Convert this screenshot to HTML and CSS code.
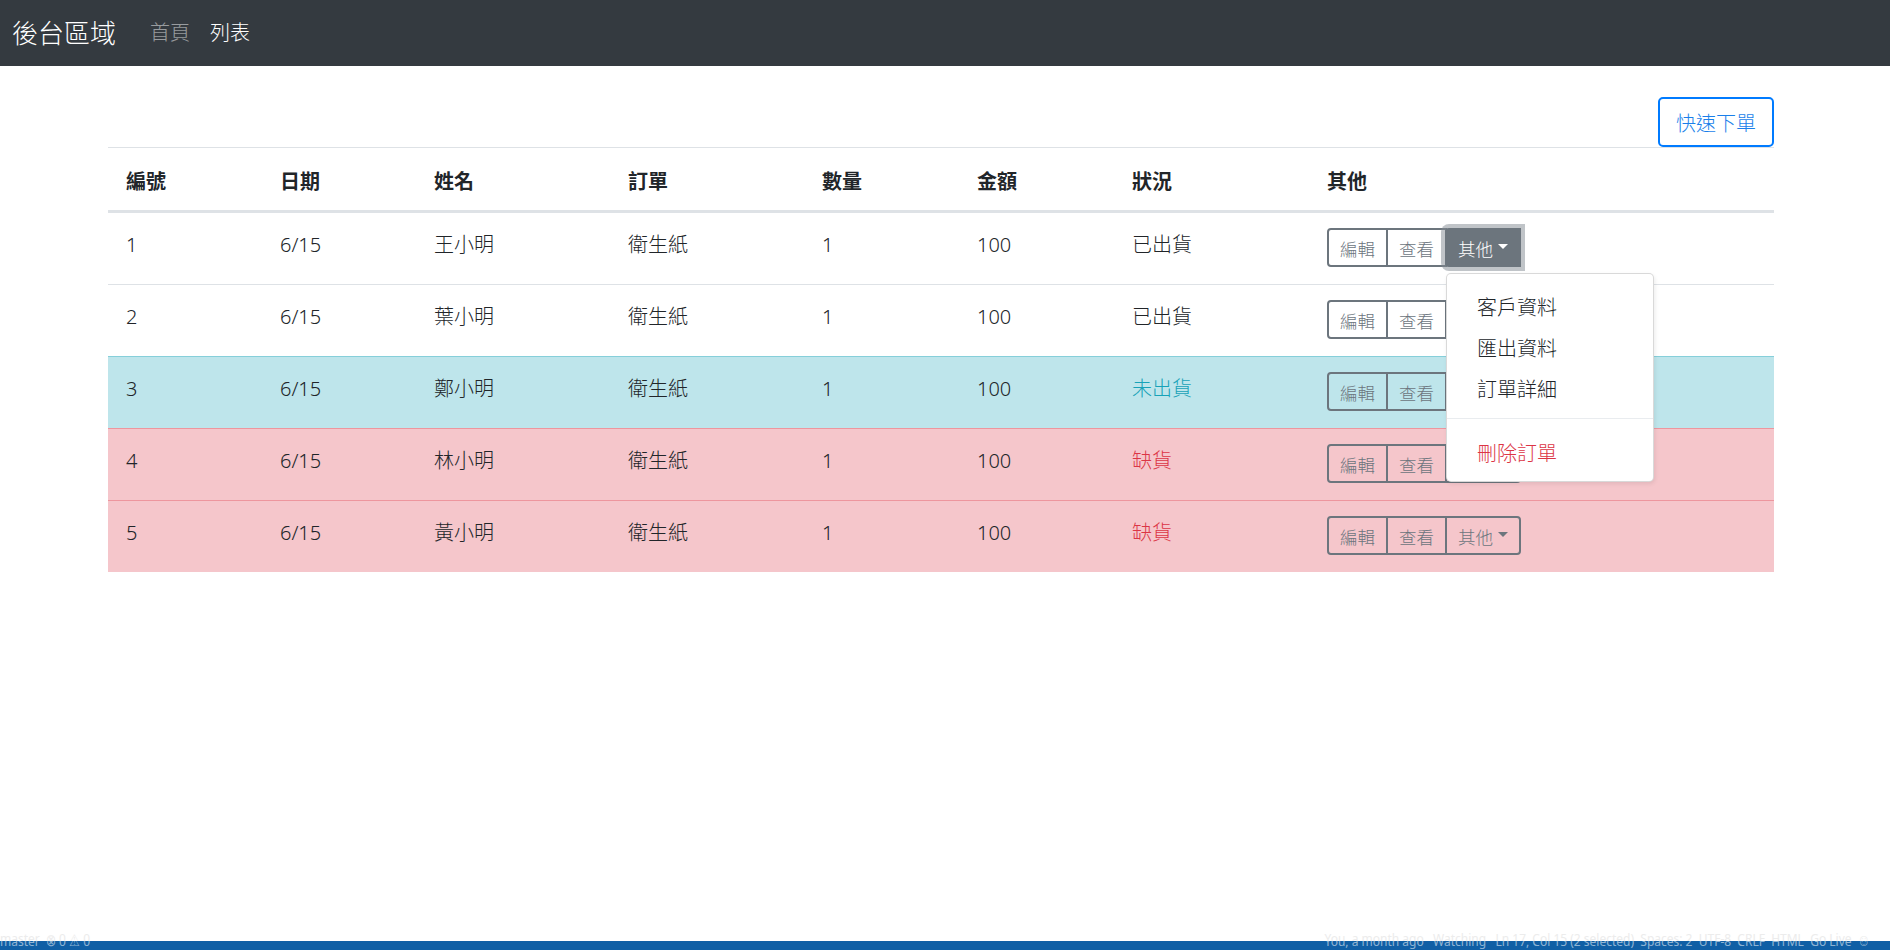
FILE: index.html
```html
<!DOCTYPE html>
<html lang="zh-Hant">
<head>
<meta charset="utf-8">
<title>後台區域</title>
<link rel="stylesheet" href="styles.css">
</head>
<body>
<nav class="navbar">
  <a class="brand" href="#">後台區域</a>
  <ul class="nav">
    <li><a class="nav-link" href="#">首頁</a></li>
    <li><a class="nav-link active" href="#">列表</a></li>
  </ul>
</nav>
<main class="content">
  <div class="toolbar">
    <button class="btn-quick" type="button">快速下單</button>
  </div>
  <table class="orders">
    <colgroup>
      <col class="c-id"><col class="c-date"><col class="c-name"><col class="c-item">
      <col class="c-qty"><col class="c-amt"><col class="c-status"><col class="c-other">
    </colgroup>
    <thead>
      <tr><th>編號</th><th>日期</th><th>姓名</th><th>訂單</th><th>數量</th><th>金額</th><th>狀況</th><th>其他</th></tr>
    </thead>
    <tbody>
      <tr>
        <td>1</td><td>6/15</td><td>王小明</td><td>衛生紙</td><td>1</td><td>100</td><td>已出貨</td>
        <td class="actions">
          <div class="btn-group">
            <button class="btn" type="button">編輯</button>
            <button class="btn" type="button">查看</button>
            <div class="dropdown">
              <button class="btn btn-last active" type="button">其他<span class="caret"></span></button>
              <div class="dropdown-menu">
                <a class="dropdown-item" href="#">客戶資料</a>
                <a class="dropdown-item" href="#">匯出資料</a>
                <a class="dropdown-item" href="#">訂單詳細</a>
                <div class="dropdown-divider"></div>
                <a class="dropdown-item danger" href="#">刪除訂單</a>
              </div>
            </div>
          </div>
        </td>
      </tr>
      <tr>
        <td>2</td><td>6/15</td><td>葉小明</td><td>衛生紙</td><td>1</td><td>100</td><td>已出貨</td>
        <td class="actions"><div class="btn-group"><button class="btn" type="button">編輯</button><button class="btn" type="button">查看</button><button class="btn btn-last" type="button">其他<span class="caret"></span></button></div></td>
      </tr>
      <tr class="row-info">
        <td>3</td><td>6/15</td><td>鄭小明</td><td>衛生紙</td><td>1</td><td>100</td><td class="st-info">未出貨</td>
        <td class="actions"><div class="btn-group"><button class="btn" type="button">編輯</button><button class="btn" type="button">查看</button><button class="btn btn-last" type="button">其他<span class="caret"></span></button></div></td>
      </tr>
      <tr class="row-danger">
        <td>4</td><td>6/15</td><td>林小明</td><td>衛生紙</td><td>1</td><td>100</td><td class="st-danger">缺貨</td>
        <td class="actions"><div class="btn-group"><button class="btn" type="button">編輯</button><button class="btn" type="button">查看</button><button class="btn btn-last" type="button">其他<span class="caret"></span></button></div></td>
      </tr>
      <tr class="row-danger">
        <td>5</td><td>6/15</td><td>黃小明</td><td>衛生紙</td><td>1</td><td>100</td><td class="st-danger">缺貨</td>
        <td class="actions"><div class="btn-group"><button class="btn" type="button">編輯</button><button class="btn" type="button">查看</button><button class="btn btn-last" type="button">其他<span class="caret"></span></button></div></td>
      </tr>
    </tbody>
  </table>
</main>
<footer class="statusbar">
  <div class="ghost">
    <span>master&nbsp;&nbsp;⊗ 0 ⚠ 0</span>
    <span>You, a month ago&nbsp;&nbsp;&nbsp;Watching&nbsp;&nbsp;&nbsp;Ln 17, Col 15 (2 selected)&nbsp;&nbsp;Spaces: 2&nbsp;&nbsp;UTF-8&nbsp;&nbsp;CRLF&nbsp;&nbsp;HTML&nbsp;&nbsp;Go Live&nbsp;&nbsp;☺</span>
  </div>
  <div class="bar">
    <span>master&nbsp;&nbsp;⊗ 0 ⚠ 0</span>
    <span>You, a month ago&nbsp;&nbsp;&nbsp;Watching&nbsp;&nbsp;&nbsp;Ln 17, Col 15 (2 selected)&nbsp;&nbsp;Spaces: 2&nbsp;&nbsp;UTF-8&nbsp;&nbsp;CRLF&nbsp;&nbsp;HTML&nbsp;&nbsp;Go Live&nbsp;&nbsp;☺</span>
  </div>
</footer>
</body>
</html>
```

FILE: styles.css
```css
* { box-sizing: border-box; }

html, body {
  margin: 0;
  padding: 0;
}

body {
  height: 950px;
  display: flex;
  flex-direction: column;
  background: #fff;
  color: #212529;
  font-family: "Noto Sans", "Noto Sans CJK TC", sans-serif;
  font-size: 20px;
  line-height: 30px;
  overflow: hidden;
}

/* ---------- navbar ---------- */
.navbar {
  height: 66px;
  flex: 0 0 66px;
  background: #343a40;
  display: flex;
  align-items: center;
  padding: 0 0 0 12px;
}

.brand {
  color: #fff;
  font-size: 26px;
  font-weight: 300;
  line-height: 37px;
  text-decoration: none;
  margin-right: 24px;
}

.nav {
  display: flex;
  list-style: none;
  margin: 0;
  padding: 0;
}

.nav-link {
  display: block;
  padding: 0 10px;
  font-size: 20px;
  font-weight: 300;
  line-height: 30px;
  color: rgba(255, 255, 255, 0.5);
  text-decoration: none;
}

.nav-link.active {
  color: #fff;
}

/* ---------- content ---------- */
.content {
  flex: 1 1 auto;
  padding: 31px 0 0 108px;
}

.toolbar {
  width: 1666px;
  display: flex;
  justify-content: flex-end;
}

.btn-quick {
  font-family: inherit;
  font-size: 20px;
  font-weight: 300;
  line-height: 30px;
  height: 50px;
  padding: 4px 16px 0;
  color: #1a7fea;
  background: #fff;
  border: 2px solid #007bff;
  border-radius: 5px;
  cursor: pointer;
}

/* ---------- table ---------- */
.orders {
  width: 1666px;
  border-collapse: collapse;
  table-layout: fixed;
}

.c-id { width: 154px; }
.c-date { width: 154px; }
.c-name { width: 194px; }
.c-item { width: 194px; }
.c-qty { width: 155px; }
.c-amt { width: 155px; }
.c-status { width: 195px; }

.orders th {
  text-align: left;
  font-weight: 700;
  padding: 19px 17px 13px 18px;
  line-height: 30px;
  vertical-align: bottom;
  border-top: 1px solid #dee2e6;
  border-bottom: 3px solid #dee2e6;
}

.orders td {
  padding: 17px 17px 15px 18px;
  line-height: 30px;
  font-weight: 300;
  vertical-align: top;
  border-top: 1px solid #dee2e6;
}

.orders td.actions {
  padding: 15px 17px 17px 18px;
}

.orders tbody tr:first-child td {
  border-top: 0;
}

.row-info td {
  background: #bee5eb;
  border-top-color: #86cfda;
}

.row-danger td {
  background: #f5c6cb;
  border-top-color: #ed969e;
}

.st-info { color: #17a2b8; }
.st-danger { color: #dc3545; }

/* ---------- button group ---------- */
.btn-group {
  display: inline-flex;
  vertical-align: top;
}

.dropdown {
  position: relative;
  display: flex;
  margin-left: -2px;
}

.btn {
  font-family: inherit;
  font-size: 17.5px;
  font-weight: 300;
  line-height: 26px;
  height: 39px;
  padding: 3px 11px 0;
  display: inline-flex;
  align-items: center;
  color: #6c757d;
  background: transparent;
  border: 2px solid #6c757d;
  border-radius: 0;
  cursor: pointer;
}

.btn + .btn {
  margin-left: -2px;
}

.btn:first-child {
  border-radius: 4px 0 0 4px;
}

.btn-last {
  border-radius: 0 4px 4px 0;
}

.btn.active {
  color: #fff;
  background: #6c757d;
  border-color: #6c757d;
  box-shadow: 0 0 0 4px rgba(130, 138, 145, 0.5);
  position: relative;
  z-index: 1;
}

.caret {
  display: inline-block;
  margin-left: 4.5px;
  margin-top: -5px;
  width: 0;
  height: 0;
  border-top: 5.25px solid currentColor;
  border-left: 5.25px solid transparent;
  border-right: 5.25px solid transparent;
}

/* ---------- dropdown ---------- */
.dropdown-menu {
  position: absolute;
  top: calc(100% + 6px);
  left: 1px;
  width: 208px;
  padding: 10px 0;
  background: #fff;
  border: 1px solid rgba(0, 0, 0, 0.15);
  border-radius: 5px;
  box-shadow: 1px 2px 4px rgba(0, 0, 0, 0.08);
  z-index: 20;
}

.dropdown-item {
  display: block;
  height: 41px;
  line-height: 41px;
  padding: 3px 30px 0;
  font-size: 20px;
  font-weight: 300;
  color: #212529;
  text-decoration: none;
  white-space: nowrap;
}

.dropdown-item.danger {
  color: #dc3545;
}

.dropdown-divider {
  height: 0;
  margin: 11px 0;
  border-top: 1px solid #e9ecef;
}

/* ---------- status bar ---------- */
.statusbar {
  flex: 0 0 22px;
  display: flex;
  flex-direction: column;
  font-family: "Noto Sans", sans-serif;
  font-size: 12px;
  line-height: 13px;
}

.ghost {
  height: 13px;
  overflow: hidden;
  display: flex;
  justify-content: space-between;
  color: #ececec;
  padding: 4px 20px 0 0;
}

.bar {
  height: 9px;
  overflow: hidden;
  background: #105fa5;
  display: flex;
  justify-content: space-between;
  color: rgba(255, 255, 255, 0.55);
  padding: 0 20px 0 0;
}

.bar span {
  display: block;
  margin-top: -6px;
}
```
